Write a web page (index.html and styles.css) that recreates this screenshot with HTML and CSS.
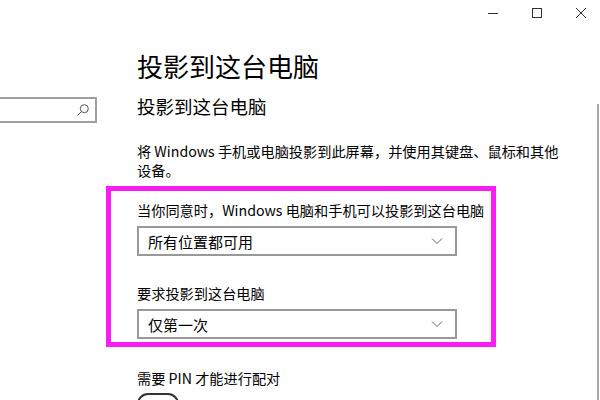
FILE: index.html
```html
<!DOCTYPE html>
<html lang="zh-CN">
<head>
<meta charset="utf-8">
<link rel="stylesheet" href="styles.css">
</head>
<body>
<div class="window">
  <div class="titlebar">
    <div class="ctl"><svg width="12" height="12" viewBox="0 0 12 12"><path d="M1 6.5H11" stroke="#333" stroke-width="1"/></svg></div>
    <div class="ctl"><svg width="12" height="12" viewBox="0 0 12 12"><rect x="1.5" y="1.5" width="9" height="9" fill="none" stroke="#333" stroke-width="1"/></svg></div>
    <div class="ctl"><svg width="12" height="12" viewBox="0 0 12 12"><path d="M1 1L11 11M11 1L1 11" stroke="#333" stroke-width="1"/></svg></div>
  </div>
  <div class="main">
    <div class="sidebar">
      <div class="search">
        <svg width="14" height="14" viewBox="0 0 14 14"><circle cx="8.3" cy="5.7" r="4" fill="none" stroke="#555" stroke-width="1"/><path d="M5.4 8.6L1.5 12.5" stroke="#555" stroke-width="1"/></svg>
      </div>
    </div>
    <div class="content">
      <h1 class="title">投影到这台电脑</h1>
      <h2 class="subtitle">投影到这台电脑</h2>
      <p class="desc">将 Windows 手机或电脑投影到此屏幕，并使用其键盘、鼠标和其他设备。</p>
      <div class="highlight">
        <div class="label">当你同意时，Windows 电脑和手机可以投影到这台电脑</div>
        <div class="select"><span>所有位置都可用</span><svg width="12" height="8" viewBox="0 0 12 8"><path d="M1 1.5L6 6.5L11 1.5" fill="none" stroke="#666" stroke-width="1"/></svg></div>
        <div class="label second">要求投影到这台电脑</div>
        <div class="select"><span>仅第一次</span><svg width="12" height="8" viewBox="0 0 12 8"><path d="M1 1.5L6 6.5L11 1.5" fill="none" stroke="#666" stroke-width="1"/></svg></div>
      </div>
      <div class="label pin">需要 PIN 才能进行配对</div>
      <div class="toggle-row"><div class="toggle"></div></div>
    </div>
  </div>
  <div class="scrollbar"></div>
</div>
</body>
</html>
```
FILE: styles.css
```css
html, body {
  margin: 0;
  padding: 0;
  background: #fff;
}
body {
  font-family: "Microsoft YaHei", "Noto Sans CJK SC", "Noto Sans", sans-serif;
  color: #000;
  width: 600px;
  height: 400px;
  overflow: hidden;
}
.window {
  position: relative;
  width: 600px;
  height: 400px;
  overflow: hidden;
}
.titlebar {
  display: flex;
  justify-content: flex-end;
  height: 26px;
  margin-right: -3px;
}
.ctl {
  width: 44px;
  display: flex;
  align-items: center;
  justify-content: center;
}
.main {
  display: flex;
}
.sidebar {
  width: 137px;
  flex: none;
  padding-top: 71px;
}
.search {
  box-sizing: border-box;
  width: 100px;
  height: 26px;
  margin-left: -3px;
  border: 2px solid #a0a0a0;
  display: flex;
  align-items: center;
  justify-content: flex-end;
  padding-right: 5px;
}
.content {
  flex: 1;
}
.title {
  margin: 22px 0 0 0;
  font-size: 26px;
  font-weight: normal;
  line-height: 36px;
}
.subtitle {
  margin: 9px 0 0 0;
  font-size: 18.5px;
  font-weight: normal;
  line-height: 26px;
}
.desc {
  margin: 23px 0 0 0;
  font-size: 14.2px;
  line-height: 19px;
  width: 430px;
}
.highlight {
  margin: 6px 0 0 -31px;
  width: 390px;
  box-sizing: border-box;
  border: 5px solid #f91df3;
  padding: 9px 0 3px 26px;
}
.label {
  font-size: 14.2px;
  line-height: 20px;
  white-space: nowrap;
}
.label.second {
  margin-top: 27px;
}
.label.pin {
  margin-top: 21px;
}
.select {
  box-sizing: border-box;
  margin-top: 6px;
  width: 320px;
  height: 30px;
  border: 2px solid #999;
  display: flex;
  align-items: center;
  justify-content: space-between;
  padding: 0 12px 0 9px;
  font-size: 15px;
}
.toggle-row {
  margin-top: 5px;
}
.toggle {
  width: 38px;
  height: 18px;
  border: 2px solid #333;
  border-radius: 11px;
}
.scrollbar {
  position: absolute;
  right: 1px;
  top: 104px;
  width: 2px;
  height: 300px;
  background: #a8a8a8;
}
```
